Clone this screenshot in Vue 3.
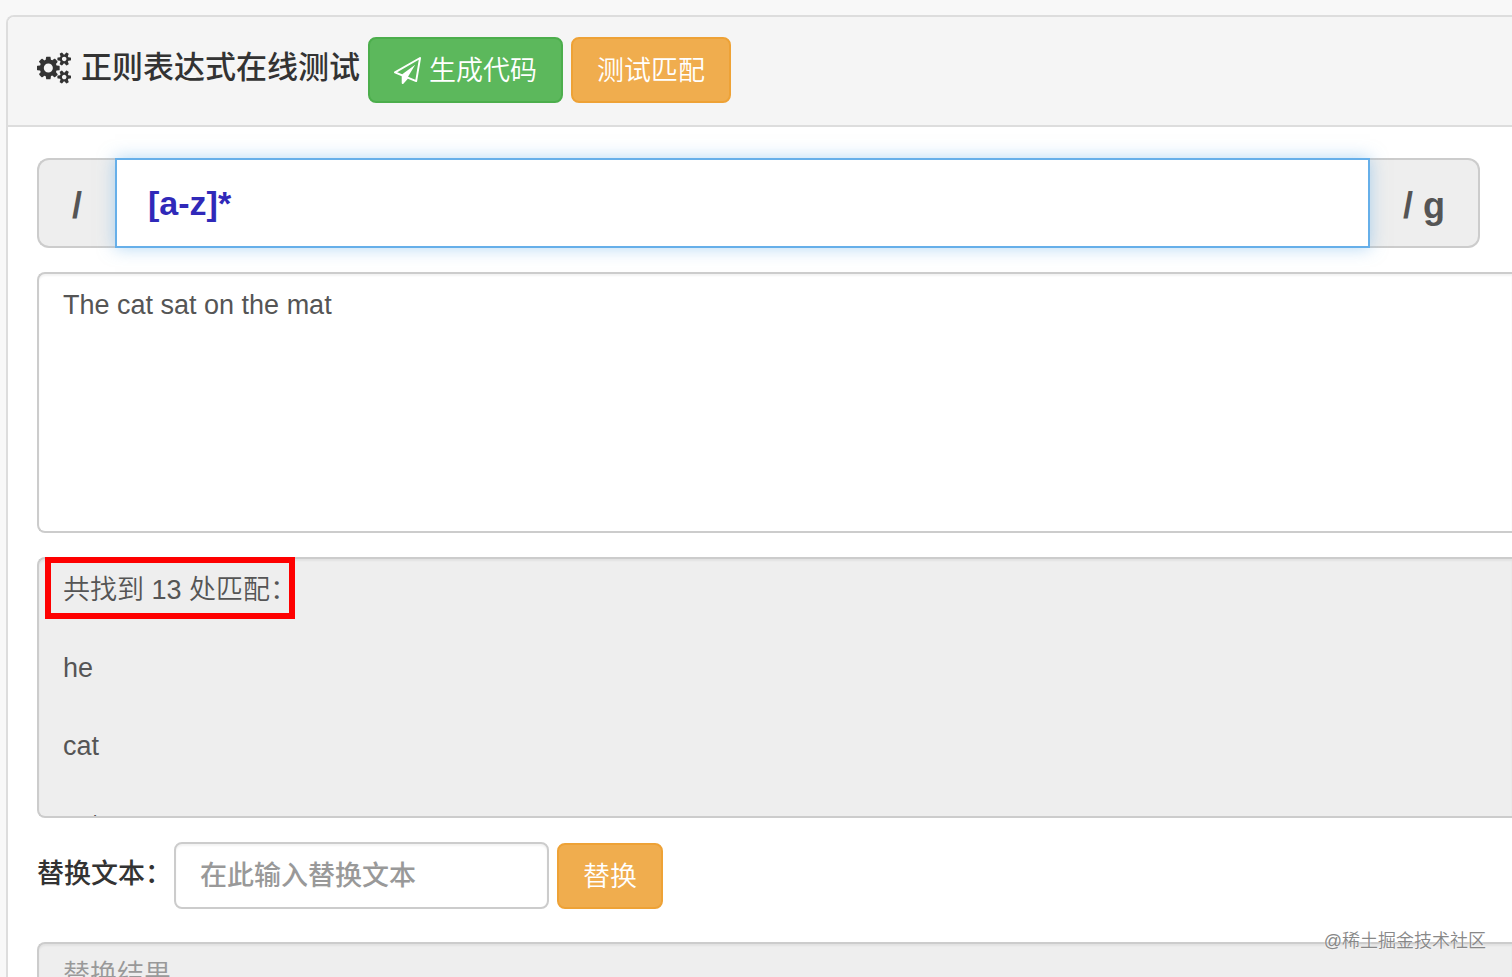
<script setup>
import { ref } from 'vue'

const pattern = ref('[a-z]*')
const source = ref('The cat sat on the mat')
const replacement = ref('')
const matches = ref('共找到 13 处匹配：\n\nhe\n\ncat\n\nsat\n\non\n\nthe\n\nmat')
</script>

<template>
  <div class="page">
    <main class="panel">
      <header class="panel-heading">
        <h1 class="title">
          <svg class="cogs" viewBox="0 0 1920 1792" aria-hidden="true">
            <path d="M896 896q0-106-75-181t-181-75-181 75-75 181 75 181 181 75 181-75 75-181zm768 512q0-52-38-90t-90-38-90 38-38 90q0 53 37.5 90.5t90.5 37.5 90.5-37.5 37.5-90.5zm0-1024q0-52-38-90t-90-38-90 38-38 90q0 53 37.5 90.5t90.5 37.5 90.5-37.5 37.5-90.5zm-384 421v185q0 10-7 19.5t-16 10.5l-155 24q-11 35-32 76 34 48 90 115 7 11 7 20 0 12-7 19-23 30-82.5 89.5t-78.5 59.5q-11 0-21-7l-115-90q-37 19-77 31-11 108-23 155-7 24-30 24h-186q-11 0-20-7.5t-10-17.5l-23-153q-34-10-75-31l-118 89q-7 7-20 7-11 0-21-8-144-133-144-160 0-9 7-19 10-14 41-53t47-61q-23-44-35-82l-152-24q-10-1-17-9.5t-7-19.5v-185q0-10 7-19.5t16-10.5l155-24q11-35 32-76-34-48-90-115-7-11-7-20 0-12 7-20 22-30 82-89t79-59q11 0 21 7l115 90q34-18 77-32 11-108 23-154 7-24 30-24h186q11 0 20 7.5t10 17.5l23 153q34 10 75 31l118-89q8-7 20-7 11 0 21 8 144 133 144 160 0 8-7 19-12 16-42 54t-45 60q23 48 34 82l152 23q10 2 17 10.5t7 19.5zm640 533v140q0 16-149 31-12 27-30 52 51 113 51 138 0 4-4 7-122 71-124 71-8 0-46-47t-52-68q-20 2-30 2t-30-2q-14 21-52 68t-46 47q-2 0-124-71-4-3-4-7 0-25 51-138-18-25-30-52-149-15-149-31v-140q0-16 149-31 13-29 30-52-51-113-51-138 0-4 4-7 4-2 35-20t59-34 30-16q8 0 46 46.5t52 67.5q20-2 30-2t30 2q51-71 92-112l6-2q4 0 124 70 4 3 4 7 0 25-51 138 17 23 30 52 149 15 149 31zm0-1024v140q0 16-149 31-12 27-30 52 51 113 51 138 0 4-4 7-122 71-124 71-8 0-46-47t-52-68q-20 2-30 2t-30-2q-14 21-52 68t-46 47q-2 0-124-71-4-3-4-7 0-25 51-138-18-25-30-52-149-15-149-31v-140q0-16 149-31 13-29 30-52-51-113-51-138 0-4 4-7 4-2 35-20t59-34 30-16q8 0 46 46.5t52 67.5q20-2 30-2t30 2q51-71 92-112l6-2q4 0 124 70 4 3 4 7 0 25-51 138 17 23 30 52 149 15 149 31z" />
          </svg>
          <span>正则表达式在线测试</span>
        </h1>
        <button type="button" class="btn btn-success">
          <svg class="plane" viewBox="0 0 1792 1792" aria-hidden="true">
            <path d="M1764 11q33 24 27 64l-256 1536q-5 29-32 45-14 8-31 8-11 0-24-5l-527-215-298 327q-18 21-47 21-14 0-23-4-19-7-30-23.5t-11-36.5v-452l-472-193q-37-14-40-55-3-39 32-59l1664-960q35-21 68 2zm-342 1499l221-1323-1434 827 336 137 863-639-478 797z" />
          </svg>
          <span class="btn-text">生成代码</span>
        </button>
        <button type="button" class="btn btn-warning"><span class="btn-text">测试匹配</span></button>
      </header>

      <div class="panel-body">
        <div class="input-group">
          <label class="addon addon-start" for="pattern">/</label>
          <input id="pattern" v-model="pattern" class="pattern" type="text" spellcheck="false" />
          <span class="addon addon-end">/ g</span>
        </div>

        <textarea v-model="source" class="area" aria-label="待匹配文本" spellcheck="false"></textarea>

        <div class="result">
          <textarea v-model="matches" class="area area-readonly" aria-label="匹配结果" readonly></textarea>
          <div class="highlight"></div>
        </div>

        <div class="replace-row">
          <label class="replace-label" for="replacement">替换文本：</label>
          <input id="replacement" v-model="replacement" class="replace-input" type="text" placeholder="在此输入替换文本" />
          <button type="button" class="btn btn-warning"><span class="btn-text">替换</span></button>
        </div>

        <textarea class="area area-readonly" aria-label="替换结果" placeholder="替换结果" readonly></textarea>
      </div>
    </main>
    <div class="watermark">@稀土掘金技术社区</div>
  </div>
</template>

<style>
body {
  margin: 0;
  background: #f8f8f8;
}
</style>

<style scoped>
.page,
.page * {
  box-sizing: border-box;
}

.page {
  position: relative;
  height: 100vh;
  overflow: hidden;
  padding: 15px 0 0 6px;
  color: #333;
  font-family: "Liberation Sans", "Noto Sans CJK SC", sans-serif;
  font-size: 27px;
  line-height: 39px;
}

.panel {
  border: 2px solid #ddd;
  border-right: 0;
  border-radius: 8px 0 0 0;
  background: #fff;
  overflow: hidden;
}

.panel-heading {
  display: flex;
  align-items: flex-start;
  gap: 8px;
  padding: 20px 30px 22px 29px;
  border-bottom: 2px solid #ddd;
  background: #f5f5f5;
}

.title {
  display: flex;
  align-items: center;
  gap: 10px;
  margin: 0;
  font-size: 31px;
  font-weight: 500;
  line-height: 61px;
  white-space: nowrap;
}

.cogs {
  width: 34px;
  height: 32px;
  fill: currentColor;
}

.btn {
  display: flex;
  align-items: center;
  gap: 8px;
  flex: none;
  height: 66px;
  padding: 0 24px;
  border: 2px solid;
  border-radius: 8px;
  color: #fff;
  font: inherit;
  font-weight: 350;
  white-space: nowrap;
  cursor: pointer;
}

.btn-text {
  padding-top: 3px;
}

.btn-success {
  border-color: #4cae4c;
  background: #5cb85c;
}

.btn-warning {
  border-color: #eea236;
  background: #f0ad4e;
}

.plane {
  width: 27px;
  height: 27px;
  fill: currentColor;
}

.panel-body {
  display: flex;
  flex-direction: column;
  gap: 24px;
  padding: 31px 0 30px 29px;
}

.input-group {
  display: flex;
  height: 90px;
  margin-right: 32px;
}

.addon {
  display: flex;
  align-items: center;
  justify-content: center;
  flex: none;
  padding-top: 4px;
  border: 2px solid #ccc;
  background: #eee;
  color: #555;
  font-size: 36px;
  font-weight: 700;
}

.addon-start {
  width: 78px;
  border-right: 0;
  border-radius: 12px 0 0 12px;
}

.addon-end {
  width: 110px;
  border-left: 0;
  border-radius: 0 12px 12px 0;
}

.pattern {
  position: relative;
  flex: 1;
  min-width: 0;
  padding: 0 31px;
  border: 2px solid #66afe9;
  border-radius: 0;
  outline: 0;
  background: #fff;
  box-shadow: 0 0 16px rgba(102, 175, 233, 0.5);
  color: #3029b9;
  font: inherit;
  font-size: 34px;
  font-weight: 700;
}

.area {
  display: block;
  width: 100%;
  height: 261px;
  padding: 12px 24px;
  border: 2px solid #ccc;
  border-right: 0;
  border-radius: 8px 0 0 8px;
  outline: 0;
  resize: none;
  overflow: hidden;
  background: #fff;
  box-shadow: inset 0 2px 2px rgba(0, 0, 0, 0.05);
  color: #555;
  font: inherit;
}

.area-readonly {
  background: #eee;
  font-weight: 350;
}

.result {
  position: relative;
}

.highlight {
  position: absolute;
  top: 0;
  left: 8px;
  width: 250px;
  height: 62px;
  border: 6px solid #fe0000;
  pointer-events: none;
}

.replace-row {
  display: flex;
  align-items: center;
  gap: 8px;
  margin-bottom: 9px;
}

.replace-label {
  width: 129px;
  padding-bottom: 2px;
  font-weight: 500;
  white-space: nowrap;
}

.replace-input {
  width: 375px;
  height: 67px;
  padding: 2px 24px 0;
  border: 2px solid #ccc;
  border-radius: 8px;
  outline: 0;
  background: #fff;
  box-shadow: inset 0 2px 2px rgba(0, 0, 0, 0.05);
  color: #555;
  font: inherit;
  font-weight: 500;
}

.area::placeholder,
.replace-input::placeholder {
  color: #999;
  opacity: 1;
}

.watermark {
  position: absolute;
  right: 26px;
  bottom: 23px;
  color: #888;
  font-size: 18px;
  font-weight: 350;
  line-height: 26px;
  text-shadow: 0 0 2px #fff;
}
</style>
